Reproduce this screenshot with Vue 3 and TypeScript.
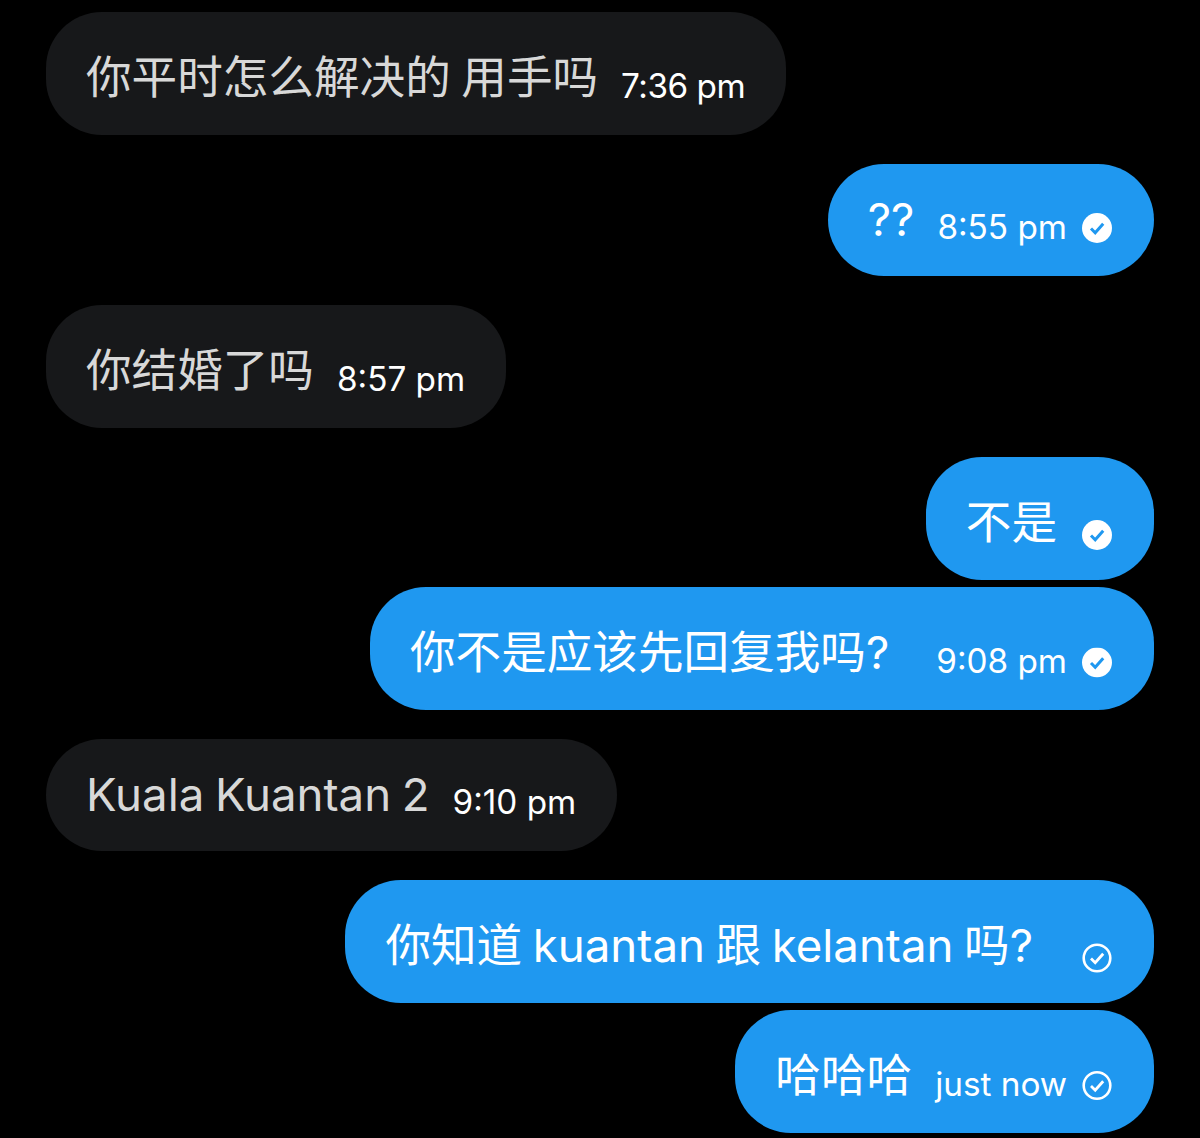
<script setup lang="ts">
interface Message {
  text: string;
  time?: string;
  mine: boolean;
  short?: boolean;
  read?: 'filled' | 'outline';
  gap?: boolean;
  trail?: boolean;
  narrow?: boolean;
}

const messages: Message[] = [
  { text: '你平时怎么解决的 用手吗', time: '7:36 pm', mine: false, narrow: true },
  { text: '??', time: '8:55 pm', mine: true, short: true, read: 'filled', gap: true },
  { text: '你结婚了吗', time: '8:57 pm', mine: false, gap: true },
  { text: '不是', mine: true, read: 'filled', gap: true },
  { text: '你不是应该先回复我吗?', time: '9:08 pm', mine: true, read: 'filled', trail: true },
  { text: 'Kuala Kuantan 2', time: '9:10 pm', mine: false, short: true, gap: true },
  { text: '你知道 kuantan 跟 kelantan 吗?', mine: true, read: 'outline', gap: true, trail: true },
  { text: '哈哈哈', time: 'just now', mine: true, read: 'outline' },
];
</script>

<template>
  <div class="chat">
    <div
      v-for="(m, i) in messages"
      :key="i"
      class="bubble"
      :class="{ mine: m.mine, short: m.short, gap: m.gap }"
    >
      <span class="text" :class="{ trail: m.trail }">{{ m.text }}</span>
      <span v-if="m.time" class="time" :class="{ narrow: m.narrow }">{{ m.time }}</span>
      <svg v-if="m.read" class="tick" viewBox="0 0 30 30" :class="{ alone: !m.time }">
        <template v-if="m.read === 'filled'">
          <circle cx="15" cy="15" r="15" fill="#fff" />
          <path d="M9 15.5l4.2 4.2 8-9" fill="none" stroke="#1f98f0" stroke-width="3" />
        </template>
        <template v-else>
          <circle cx="15" cy="15" r="13.3" fill="none" stroke="#fff" stroke-width="2.6" />
          <path d="M9 15.5l4.2 4.2 8-9" fill="none" stroke="#fff" stroke-width="2.8" />
        </template>
      </svg>
    </div>
  </div>
</template>

<style scoped>
.chat {
  display: flex;
  flex-direction: column;
  align-items: flex-start;
  gap: 7px;
  box-sizing: border-box;
  width: 1200px;
  height: 1138px;
  padding: 12px 46px 0;
  overflow: hidden;
  background: #000;
  font-family: Inter, "Noto Sans CJK SC", sans-serif;
}
.bubble {
  display: flex;
  align-items: baseline;
  box-sizing: border-box;
  height: 123px;
  padding: 0 41px 0 40px;
  line-height: 131px;
  border-radius: 56px;
  background: #17181a;
  color: #d8d8d8;
  white-space: nowrap;
}
.bubble.short {
  height: 112px;
  line-height: 112px;
}
.bubble.gap {
  margin-top: 22px;
}
.bubble.mine {
  align-self: flex-end;
  padding-right: 42px;
  background: #1f98f0;
  color: #fff;
}
.text {
  font-size: 45.6px;
  word-spacing: -2.25px;
}
.text.trail {
  padding-right: 24px;
}
.time {
  margin-left: 23px;
  font-size: 33.3px;
  color: #fff;
  transform: translateY(4px);
}
.time.narrow {
  letter-spacing: -0.5px;
}
.short .time {
  transform: translateY(3px);
}
.tick {
  align-self: center;
  flex: none;
  width: 30px;
  height: 30px;
  margin-left: 15px;
  transform: translateY(13.5px);
}
.short .tick {
  transform: translateY(8px);
}
.tick.alone {
  margin-left: 25px;
  transform: translateY(16px);
}
</style>

<style>
html,
body {
  background: #000;
}
</style>
